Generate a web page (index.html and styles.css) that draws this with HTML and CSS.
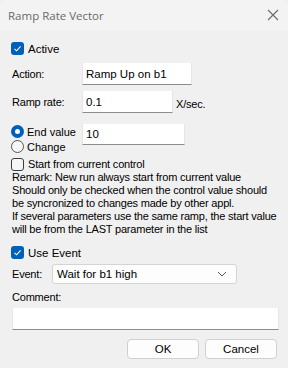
FILE: index.html
```html
<html>
  <head>
    <link rel="stylesheet" href="styles.css">
  </head>
  <body>
    <div class="window">
      <div class="titlebar">
        <span class="title">Ramp Rate Vector</span>
        <svg class="close" width="12" height="12" viewBox="0 0 12 12">
          <path d="M1 1 L11 11 M11 1 L1 11" stroke="#6b6b6b" stroke-width="1.1" fill="none" />
        </svg>
      </div>
      <div class="content">
        <div class="check-row row-active">
          <span class="box checked">
            <svg width="13" height="13" viewBox="0 0 13 13"><path d="M3.5 6.8 L5.6 8.8 L9.6 4.4" stroke="#fff" stroke-width="1.1" fill="none" /></svg>
          </span>
          <span class="big">Active</span>
        </div>

        <div class="field-row row-action">
          <label class="lbl">Action:</label>
          <div class="input w-action">Ramp Up on b1</div>
        </div>

        <div class="field-row row-rate">
          <label class="lbl">Ramp rate:</label>
          <div class="input w-rate">0.1</div>
          <span class="unit">X/sec.</span>
        </div>

        <div class="radio-block">
          <div class="radios">
            <div class="radio-row">
              <span class="radio on"></span>
              <span class="mid">End value</span>
            </div>
            <div class="radio-row">
              <span class="radio"></span>
              <span class="mid">Change</span>
            </div>
          </div>
          <div class="input w-end">10</div>
        </div>

        <div class="check-row row-start">
          <span class="box"></span>
          <span>Start from current control</span>
        </div>

        <div class="remark">
          Remark: New run always start from current value<br>
          Should only be checked when the control value should<br>
          be syncronized to changes made by other appl.<br>
          If several parameters use the same ramp, the start value<br>
          will be from the LAST parameter in the list
        </div>

        <div class="check-row row-event">
          <span class="box checked">
            <svg width="13" height="13" viewBox="0 0 13 13"><path d="M3.5 6.8 L5.6 8.8 L9.6 4.4" stroke="#fff" stroke-width="1.1" fill="none" /></svg>
          </span>
          <span class="big">Use Event</span>
        </div>

        <div class="field-row row-evsel">
          <label class="lbl-short">Event:</label>
          <div class="select">
            <span>Wait for b1 high</span>
            <svg width="10" height="6" viewBox="0 0 10 6"><path d="M1 1 L5 5 L9 1" stroke="#555" stroke-width="1" fill="none" /></svg>
          </div>
        </div>

        <div class="comment-lbl">Comment:</div>
        <div class="input w-comment"></div>

        <div class="buttons">
          <div class="btn">OK</div>
          <div class="btn">Cancel</div>
        </div>
      </div>
    </div>
  </body>
</html>
```

FILE: styles.css
```css
body {
  margin: 0;
  background: #f0f0f0;
  font-family: "Liberation Sans", Arial, sans-serif;
  font-size: 11px;
  letter-spacing: -0.2px;
  color: #000;
  white-space: nowrap;
}

.window {
  width: 288px;
  height: 368px;
  background: #f0f0f0;
  border-top-left-radius: 7px;
  border-top-right-radius: 7px;
  overflow: hidden;
}

/* title bar */
.titlebar {
  height: 30px;
  background: #f3f3f3;
  display: flex;
  align-items: center;
  justify-content: space-between;
  padding: 0 9px 0 8px;
}
.title {
  font-family: "Open Sans", "Noto Sans", sans-serif;
  font-size: 11.5px;
  letter-spacing: 0;
  color: #6a6a6a;
}

.content {
  padding: 0 11px 0 11px;
}

.big {
  font-size: 11.5px;
  letter-spacing: 0;
}
.mid {
  font-size: 11px;
  letter-spacing: 0;
}

/* checkboxes */
.check-row {
  display: flex;
  align-items: center;
  height: 15px;
}
.row-active { margin-top: 11px; }
.row-start { margin-top: 3px; height: 14px; }
.row-event { margin-top: 9px; }

.box {
  width: 11px;
  height: 11px;
  border: 1px solid #3c3c3c;
  border-radius: 3px;
  margin-right: 4px;
  display: flex;
  align-items: center;
  justify-content: center;
  background: #f6f6f6;
}
.box.checked {
  width: 13px;
  height: 13px;
  border: none;
  background: #005fb8;
}

/* text fields */
.field-row {
  display: flex;
  align-items: center;
}
.row-action { margin-top: 7px; }
.row-rate { margin-top: 6px; }
.row-evsel { margin-top: 4px; }

.lbl {
  width: 70px;
  padding-left: 1px;
}
.lbl-short {
  width: 40px;
  padding-left: 1px;
}

.input {
  height: 21px;
  background: #fff;
  border: 1px solid #e6e6e6;
  border-bottom: 1px solid #8c8c8c;
  border-top: none;
  box-sizing: border-box;
  padding: 0 3px;
  display: flex;
  align-items: center;
  font-size: 11.5px;
  letter-spacing: 0;
}
.w-action { width: 110px; height: 22px; }
.w-rate { width: 91px; height: 22px; }
.w-end { width: 103px; }
.w-comment { width: 267px; height: 22px; margin-left: 1px; margin-top: 4px; }

.unit {
  margin-left: 3px;
  margin-top: 4px;
}

/* radios */
.radio-block {
  display: flex;
  margin-top: 11px;
  height: 30px;
}
.radios {
  width: 71px;
}
.radio-row {
  display: flex;
  align-items: center;
  height: 15px;
}
.radio {
  width: 11px;
  height: 11px;
  border: 1px solid #555;
  border-radius: 50%;
  margin-right: 3px;
  background: #f6f6f6;
  box-sizing: content-box;
}
.radio.on {
  width: 5px;
  height: 5px;
  border: 4px solid #005fb8;
  background: #fff;
}

.remark {
  line-height: 13px;
  padding-left: 1px;
}

/* dropdown */
.select {
  width: 185px;
  height: 20px;
  box-sizing: border-box;
  border: 1px solid #d4d4d4;
  border-radius: 3px;
  background: #fdfdfd;
  display: flex;
  align-items: center;
  justify-content: space-between;
  padding: 0 9px 0 4px;
  font-size: 11.5px;
  letter-spacing: 0;
}

.comment-lbl {
  margin-top: 7px;
  height: 13px;
  line-height: 13px;
  padding-left: 1px;
}

/* buttons */
.buttons {
  display: flex;
  justify-content: flex-end;
  gap: 6px;
  margin-top: 9px;
}
.btn {
  width: 72px;
  height: 20px;
  box-sizing: border-box;
  border: 1px solid #d0d0d0;
  border-radius: 4px;
  background: #fdfdfd;
  display: flex;
  align-items: center;
  justify-content: center;
  font-size: 11.5px;
  letter-spacing: 0;
}
```
